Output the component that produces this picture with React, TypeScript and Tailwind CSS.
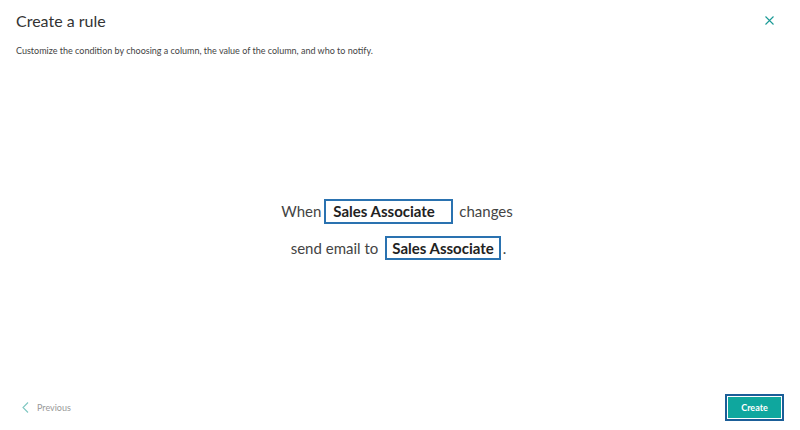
import React from "react";

export default function App() {
  return (
    <div
      className="w-[800px] h-[430px] bg-white flex flex-col text-[#333333]"
      style={{ fontFamily: 'Lato, "Open Sans", sans-serif' }}
    >
      <div className="flex items-start justify-between pl-4 pr-[26px] pt-[10px]">
        <h1 className="text-[16px] leading-[22px] font-normal text-[#333333]">Create a rule</h1>
        <button className="mt-[6px]" aria-label="Close">
          <svg width="9" height="9" viewBox="0 0 9 9">
            <path d="M0.5 0.5 L8.5 8.5 M8.5 0.5 L0.5 8.5" stroke="#1a9a96" strokeWidth="1.1" fill="none" />
          </svg>
        </button>
      </div>
      <p className="pl-4 mt-[13px] text-[9px] leading-[12px] text-[#444444]">
        Customize the condition by choosing a column, the value of the column, and who to notify.
      </p>

      <div className="flex-1 flex flex-col items-center justify-center pt-[8px] pr-[6px] text-[15px] text-[#444444]">
        <div className="flex items-center h-[25px]">
          <span className="mr-[3px]">When</span>
          <span className="h-[25px] w-[129px] border-2 border-[#2a72b0] pl-[7px] flex items-center font-bold text-[#222222]">
            Sales Associate
          </span>
          <span className="ml-[6px]">changes</span>
        </div>
        <div className="flex items-center h-[24px] mt-[12px] pl-[3px]">
          <span className="mr-[7px]">send email to</span>
          <span className="h-[24px] border-2 border-[#2a72b0] px-[5px] flex items-center font-bold text-[#222222]">
            Sales Associate
          </span>
          <span className="ml-[2px]">.</span>
        </div>
      </div>

      <div className="flex items-center justify-between pl-[22px] pr-[16px] pb-[9px]">
        <button className="flex items-center gap-[8px] text-[9px] text-[#999999]">
          <svg width="7" height="11" viewBox="0 0 7 11">
            <path d="M6 0.5 L1 5.5 L6 10.5" stroke="#7fc7c1" strokeWidth="1.1" fill="none" />
          </svg>
          <span>Previous</span>
        </button>
        <button className="w-[59px] h-[27px] border-2 border-[#1b5e98] p-[1px] bg-white">
          <span className="w-full h-full bg-[#0fa79e] flex items-center justify-center text-white text-[9px] font-bold">
            Create
          </span>
        </button>
      </div>
    </div>
  );
}
